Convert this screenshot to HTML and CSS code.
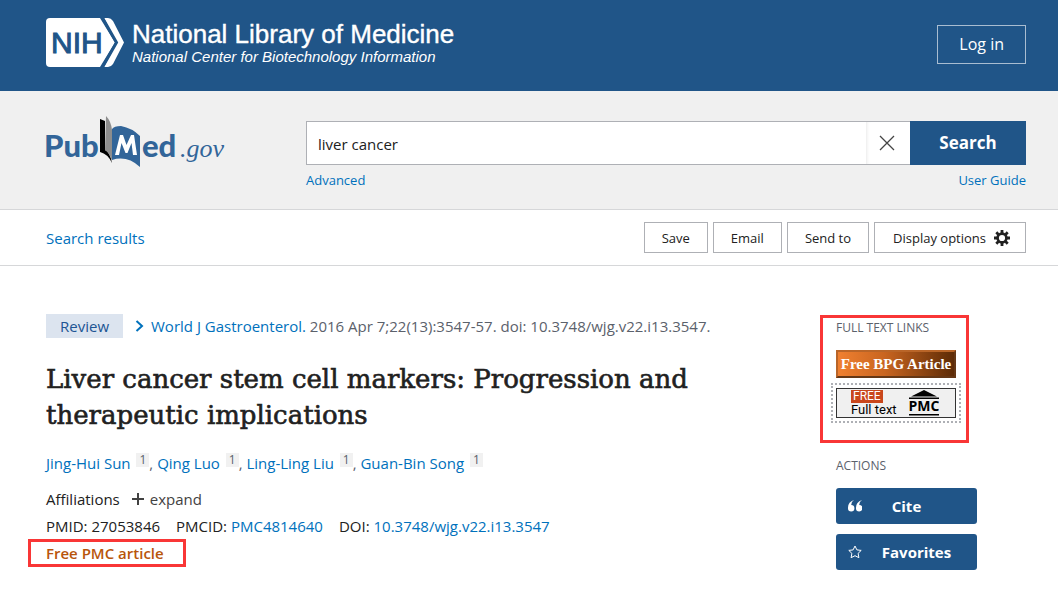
FILE: index.html
```html
<!DOCTYPE html>
<html lang="en">
<head>
<meta charset="utf-8">
<meta name="viewport" content="width=device-width, initial-scale=1">
<title>Liver cancer stem cell markers - PubMed</title>
<link rel="stylesheet" href="styles.css">
</head>
<body>
<header class="site-header">
  <a class="brand" href="#">
    <svg class="nih-logo" width="78" height="49" viewBox="0 0 78 49" aria-hidden="true">
      <path class="white" d="M4 0H54L69 24.500L54 49H4Q0 49 0 45V4Q0 0 4 0Z"/>
      <path class="white" d="M58 0H62Q65 0 67 3L78 24.500L67 46Q65 49 62 49H58L71 24.500Z"/>
      <path class="gap-line" d="M56 -1L70.500 24.500L56 50"/>
      <text x="5" y="35" class="nih-text">NIH</text>
    </svg>
    <span class="brand-names">
      <span class="brand-title">National Library of Medicine</span>
      <span class="brand-sub">National Center for Biotechnology Information</span>
    </span>
  </a>
  <a class="login" href="#">Log in</a>
</header>

<form class="search-area">
  <a class="pubmed" href="#" aria-label="PubMed.gov">
    <svg width="184" height="52" viewBox="0 0 184 52">
      <text class="pm-word" x="0" y="41">Pub</text>
      <path d="M56 3L61 5V34Q66 36 68 47Q64 38 56 36Z" fill="#000"/>
      <path d="M62 0Q67 5 68 14V47Q67 38 61 34Z" fill="#8d8d8d"/>
      <path d="M68 13Q70 10 77 10Q88 12 96 20V51Q83 39 68 44Z" fill="#326599"/>
      <path d="M71 39L76 19H79L82.500 29L87 19H90L93 39H89L87.500 27L83.500 37H81.500L77.500 27L75 39Z" fill="#fff"/>
      <text class="pm-word" x="98" y="41">ed</text>
      <text class="pm-gov" x="136" y="41">.gov</text>
    </svg>
  </a>
  <div class="search-column">
    <div class="search-box">
      <input class="search-input" type="text" value="liver cancer" aria-label="Search term">
      <button class="clear" type="button" aria-label="Clear search">
        <svg width="16" height="16" viewBox="0 0 16 16"><path d="M1 1L15 15M15 1L1 15" fill="none" stroke="#444" stroke-width="1.300"/></svg>
      </button>
      <button class="search-button" type="button">Search</button>
    </div>
    <div class="search-links"><a href="#">Advanced</a><a href="#">User Guide</a></div>
  </div>
</form>

<nav class="toolbar">
  <a class="results-link" href="#">Search results</a>
  <div class="tools">
    <button class="tool" type="button">Save</button>
    <button class="tool" type="button">Email</button>
    <button class="tool" type="button">Send to</button>
    <button class="tool display" type="button">Display options
      <svg width="16" height="16" viewBox="0 0 16 16"><g stroke="#212121" fill="none"><circle cx="8" cy="8" r="4.400" stroke-width="2.600"/><path stroke-width="2.800" d="M8 0V3M8 13V16M0 8H3M13 8H16M2.300 2.300L4.400 4.400M11.600 11.600L13.700 13.700M13.700 2.300L11.600 4.400M4.400 11.600L2.300 13.700"/></g></svg>
    </button>
  </div>
</nav>

<main class="content">
  <article class="article">
    <div class="citation">
      <span class="badge">Review</span>
      <svg class="chevron" width="9" height="12" viewBox="0 0 9 12"><path d="M1.500 1L7 6L1.500 11" fill="none" stroke="#0071bc" stroke-width="2"/></svg>
      <span><a href="#">World J Gastroenterol.</a> 2016 Apr 7;22(13):3547-57. doi: 10.3748/wjg.v22.i13.3547.</span>
    </div>
    <h1 class="title">Liver cancer stem cell markers: Progression and therapeutic implications</h1>
    <p class="authors"><a href="#">Jing-Hui Sun</a> <sup>1</sup>, <a href="#">Qing Luo</a> <sup>1</sup>, <a href="#">Ling-Ling Liu</a> <sup>1</sup>, <a href="#">Guan-Bin Song</a> <sup>1</sup></p>
    <div class="affiliations">
      <span>Affiliations</span>
      <button class="expand" type="button"><svg width="12" height="12" viewBox="0 0 12 12"><path d="M6 0V12M0 6H12" stroke="#424242" stroke-width="2"/></svg>expand</button>
    </div>
    <div class="ids">
      <span>PMID: 27053846</span>
      <span>PMCID: <a href="#">PMC4814640</a></span>
      <span>DOI: <a href="#">10.3748/wjg.v22.i13.3547</a></span>
    </div>
    <div class="free-mark">Free PMC article</div>
  </article>

  <aside class="side">
    <section class="links-mark">
      <h2 class="side-title">FULL TEXT LINKS</h2>
      <a class="bpg" href="#">Free BPG Article</a>
      <a class="pmc" href="#">
        <span class="pmc-inner">
          <span class="pmc-words"><span class="free">FREE</span><span>Full text</span></span>
          <svg width="30" height="26" viewBox="0 0 30 26"><path d="M15 0L28 6.500H2ZM0 7.500H30V9H0ZM0 24H30V25.500H0Z"/><text x="15" y="21" class="pmc-text">PMC</text></svg>
        </span>
      </a>
    </section>
    <section class="actions">
      <h2 class="side-title">ACTIONS</h2>
      <button class="action cite" type="button">
        <svg width="14" height="12" viewBox="0 0 14 12"><path fill="#fff" d="M6 0Q3.300 1.500 3.200 5A3.200 3.200 0 1 1 0 8.200Q-.2 2 6 0ZM14 0Q11.300 1.500 11.200 5A3.200 3.200 0 1 1 8 8.200Q7.800 2 14 0Z"/></svg>
        <span>Cite</span>
      </button>
      <button class="action favorites" type="button">
        <svg width="14" height="14" viewBox="0 0 14 14"><path fill="none" stroke="#fff" stroke-linejoin="round" d="M7 1L8.900 4.900L13.200 5.400L10.100 8.400L10.900 12.700L7 10.700L3.100 12.700L3.900 8.400L.8 5.400L5.100 4.900Z"/></svg>
        <span>Favorites</span>
      </button>
    </section>
  </aside>
</main>
</body>
</html>
```
FILE: styles.css
```css
* { box-sizing: border-box; }
body {
  margin: 0;
  background: #fff;
  color: #212121;
  font: 15px/20px "Open Sans", "Noto Sans", sans-serif;
}
a { color: #0071bc; text-decoration: none; }
button { font: inherit; color: inherit; margin: 0; cursor: pointer; }

.site-header {
  display: flex;
  align-items: center;
  justify-content: space-between;
  height: 91px;
  padding: 0 32px 2px 46px;
  background: #205588;
}
.brand { display: flex; align-items: center; gap: 8px; color: #fff; padding-bottom: 4px; }
.white { fill: #fff; }
.gap-line { fill: none; stroke: #205588; stroke-width: 3; }
.nih-text { font: 30px "Liberation Sans", sans-serif; fill: #205588; stroke: #205588; }
.brand-names { display: flex; flex-direction: column; font-family: "Liberation Sans", sans-serif; }
.brand-title { font-size: 26px; line-height: 28px; -webkit-text-stroke: 0.4px #fff; }
.brand-sub { font-size: 15px; line-height: 18px; font-style: italic; }
.login {
  padding: 8px 21px;
  border: 1px solid #a9bdd1;
  color: #fff;
  font-size: 16px;
  line-height: 21px;
}

.search-area {
  display: grid;
  grid-template-columns: 260px 1fr;
  padding: 30px 32px 19px 46px;
  background: #f0f0f0;
  border-bottom: 1px solid #d6d7d9;
}
.pubmed { display: block; height: 52px; margin: -5px 0 0 -2px; }
.pm-word { font: 900 31px Lato, sans-serif; fill: #326599; }
.pm-gov { font: italic 26px "Liberation Serif", serif; fill: #326599; }
.search-box { display: flex; height: 44px; }
.search-input {
  flex: 1;
  min-width: 0;
  padding: 2px 11px 0;
  border: 1px solid #aeb0b5;
  border-right: 0;
  border-radius: 0;
  background: #fff;
  color: #212121;
  font: inherit;
  outline: 0;
}
.clear {
  display: grid;
  place-items: center;
  width: 44px;
  padding: 0 2px 0 0;
  border: solid #aeb0b5;
  border-width: 1px 0;
  background: #fff;
  box-shadow: inset 4px 0 5px -5px #ccc;
}
.search-button {
  width: 116px;
  padding: 0;
  border: 0;
  background: #205588;
  color: #fff;
  font-size: 17px;
  font-weight: 700;
}
.search-links { display: flex; justify-content: space-between; padding-top: 5px; font-size: 13px; }

.toolbar {
  display: flex;
  align-items: center;
  justify-content: space-between;
  height: 56px;
  padding: 0 32px 0 46px;
  border-bottom: 1px solid #d6d7d9;
}
.tools { display: flex; gap: 5px; }
.tool {
  display: flex;
  align-items: center;
  gap: 8px;
  height: 31px;
  padding: 0 17px;
  border: 1px solid #aeb0b5;
  background: #fff;
  font-size: 13px;
}
.display { padding: 0 15px 0 18px; }

.content {
  display: grid;
  grid-template-columns: 1fr 157px;
  column-gap: 90px;
  padding: 48px 81px 24px 46px;
}
.citation { display: flex; align-items: center; color: #5b616b; height: 24px; white-space: nowrap; }
.badge {
  padding: 2px 14px;
  background: #dce4ef;
  color: #205493;
}
.chevron { margin: 0 7px 0 12px; }
.title {
  margin: 23px 0 20px;
  font: 26px/36px "DejaVu Serif", serif;
  -webkit-text-stroke: 0.6px #212121;
}
.authors { margin: 0 0 16px; color: #5b616b; }
sup {
  display: inline-block;
  margin-left: 2px;
  padding: 0 3px;
  background: #f1f1f1;
  font-size: 12px;
  line-height: 14px;
  vertical-align: 5px;
}
.affiliations { display: flex; gap: 12px; margin-bottom: 7px; }
.expand {
  display: flex;
  align-items: center;
  gap: 6px;
  padding: 0;
  border: 0;
  background: none;
  color: #424242;
}
.ids { display: flex; gap: 16px; white-space: nowrap; }
.free-mark {
  width: fit-content;
  margin: 3px 0 0 -18px;
  padding: 1px 19px 1px 15px;
  border: 3px solid #f93636;
  color: #b8550b;
  font-weight: 600;
}
.links-mark {
  width: 149px;
  height: 128px;
  margin: 1px 0 15px;
  padding: 2px 13px;
  border: 3px solid #f93636;
}
.side-title { margin: 0; font-size: 12px; font-weight: 400; line-height: 16px; color: #5b616b; white-space: nowrap; }
.bpg {
  display: block;
  width: 120px;
  margin-top: 14px;
  border: 2px outset #b96528;
  background: linear-gradient(90deg, #f08030, #c96520 40%, #5d2b06);
  color: #fff;
  font: bold 15px/24px "Liberation Serif", serif;
  text-align: center;
  white-space: nowrap;
}
.pmc {
  display: block;
  width: 130px;
  margin: 5px 0 0 -5px;
  padding: 3px;
  border: 2px dotted #aeb0b5;
  color: #000;
}
.pmc-inner {
  display: flex;
  justify-content: space-between;
  align-items: center;
  height: 30px;
  padding: 0 16px 0 14px;
  border: 1px solid #333;
  background: #f0f0f0;
}
.pmc-words { display: flex; flex-direction: column; align-items: flex-start; font: 13px/14px Roboto, sans-serif; white-space: nowrap; }
.free { padding: 0 2px; background: #c9471c; color: #fff; font-size: 12px; line-height: 13px; }
.pmc-text { font: bold 14px "Open Sans", sans-serif; text-anchor: middle; }
.actions { display: flex; flex-direction: column; padding: 0 0 0 16px; gap: 10px; }
.actions .side-title { margin-bottom: 4px; }
.action {
  display: flex;
  align-items: center;
  height: 36px;
  padding: 0 12px;
  border: 0;
  border-radius: 3px;
  background: #205588;
  color: #fff;
  font-weight: 700;
}
.action span { flex: 1; text-align: center; }
.cite { padding-right: 26px; }
.favorites { padding-right: 6px; }
```
